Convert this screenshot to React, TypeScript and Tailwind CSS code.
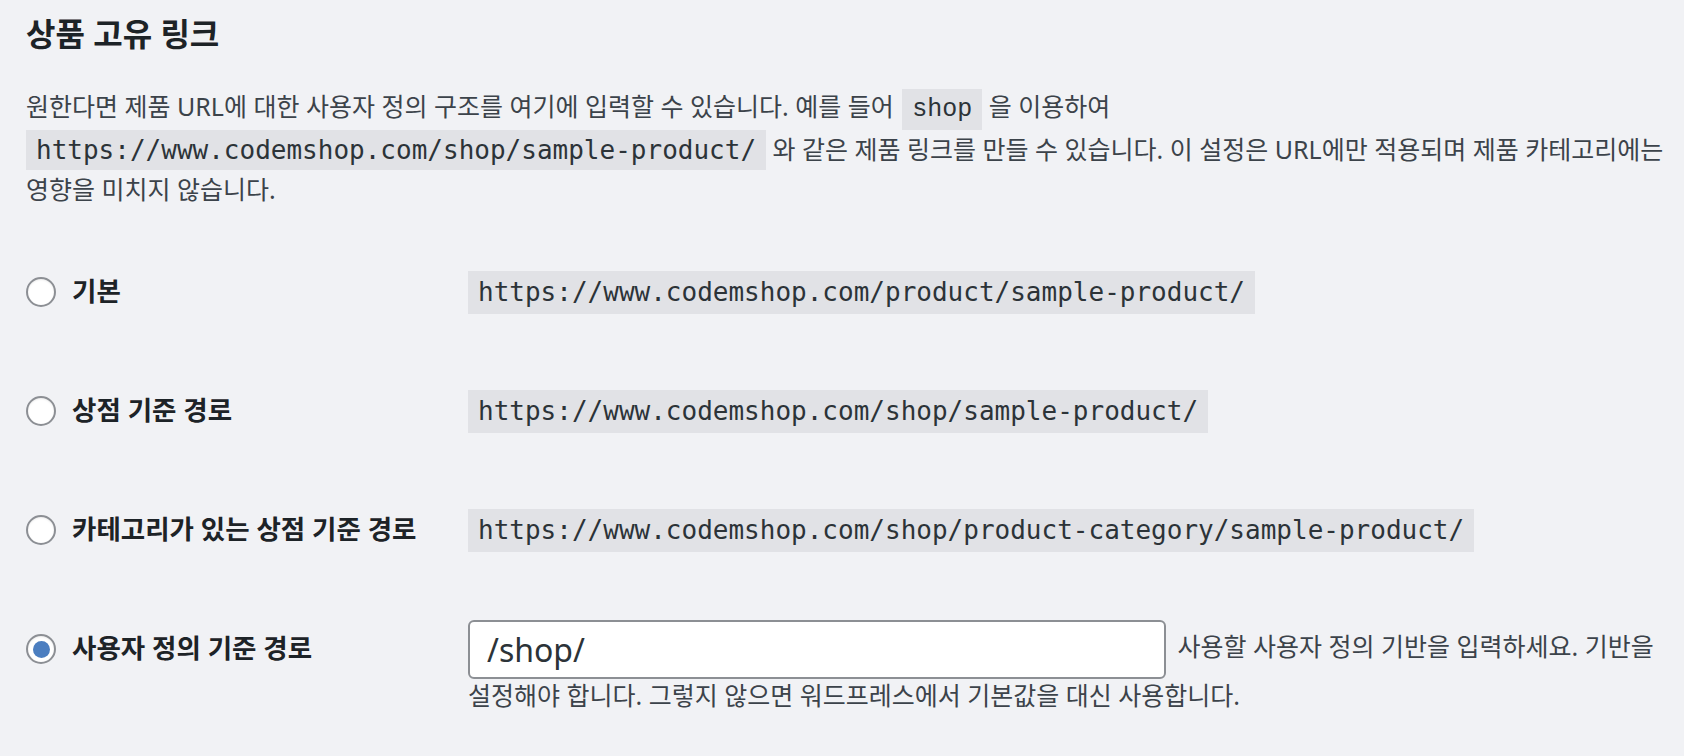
import { useState } from "react";

const sans = "font-['Noto_Sans','Noto_Sans_CJK_KR',sans-serif]";

const options = [
  { id: "default", label: "기본", url: "https://www.codemshop.com/product/sample-product/" },
  { id: "shop", label: "상점 기준 경로", url: "https://www.codemshop.com/shop/sample-product/" },
  {
    id: "category",
    label: "카테고리가 있는 상점 기준 경로",
    url: "https://www.codemshop.com/shop/product-category/sample-product/",
  },
];

const Radio = ({ checked, onChange }: { checked: boolean; onChange: () => void }) => (
  <button
    type="button"
    onClick={onChange}
    className="w-[30px] h-[30px] shrink-0 rounded-full border-2 border-[#8c8f94] bg-white flex items-center justify-center shadow-[inset_0_1px_2px_rgba(0,0,0,0.08)]"
  >
    {checked && <span className="w-[17px] h-[17px] rounded-full bg-[#4b7ec0]" />}
  </button>
);

const Code = ({ children }: { children: string }) => (
  <code className="bg-[#e1e2e6] px-[10px] py-[5px] text-[26px] text-[#2c3338] font-['DejaVu_Sans_Mono',monospace]">
    {children}
  </code>
);

export default function App() {
  const [selected, setSelected] = useState("custom");
  const [base, setBase] = useState("/shop/");

  return (
    <div className={`w-full h-[756px] overflow-hidden bg-[#f1f2f5] pl-[26px] pt-[14px] ${sans}`}>
      <h2 className="text-[32px] leading-[40px] font-bold text-[#1d2327]">상품 고유 링크</h2>

      <p className="mt-[33px] text-[25px] leading-[39.5px] text-[#3c434a] whitespace-nowrap">
        원한다면 제품 URL에 대한 사용자 정의 구조를 여기에 입력할 수 있습니다. 예를 들어{" "}
        <code className="bg-[#e1e2e6] px-[10px] py-[6px] ml-[2px] text-[25px] text-[#2c3338]">shop</code> 을 이용하여
        <br />
        <Code>https://www.codemshop.com/shop/sample-product/</Code> 와 같은 제품 링크를 만들 수 있습니다. 이 설정은
        URL에만 적용되며 제품 카테고리에는
        <br />
        영향을 미치지 않습니다.
      </p>

      <div className="mt-[23px]">
        {options.map((o) => (
          <div key={o.id} className="h-[119px] grid grid-cols-[442px_1fr] items-center">
            <label className="flex items-center gap-[16px] cursor-pointer">
              <Radio checked={selected === o.id} onChange={() => setSelected(o.id)} />
              <span className="text-[26.5px] font-bold text-[#1d2327]">{o.label}</span>
            </label>
            <div>
              <code className="inline-block bg-[#e1e2e6] px-[10px] py-[5px] leading-[33px] text-[26px] text-[#2c3338] font-['DejaVu_Sans_Mono',monospace]">
                {o.url}
              </code>
            </div>
          </div>
        ))}

        <div className="grid grid-cols-[442px_1fr] items-start pt-[30px]">
          <label className="h-[59px] flex items-center gap-[16px] cursor-pointer">
            <Radio checked={selected === "custom"} onChange={() => setSelected("custom")} />
            <span className="text-[26.5px] font-bold text-[#1d2327]">사용자 정의 기준 경로</span>
          </label>
          <div className="text-[25px] leading-[39.5px] text-[#3c434a] whitespace-nowrap">
            <input
              value={base}
              onChange={(e) => setBase(e.target.value)}
              className="align-middle w-[698px] h-[59px] mr-[5px] px-[17px] rounded-[6px] border-2 border-[#8c8f94] bg-white text-[32px] text-[#2c3338] outline-none"
            />{" "}
            사용할 사용자 정의 기반을 입력하세요. 기반을
            <br />
            <span className="relative -top-[3px]">
              설정해야 합니다. 그렇지 않으면 워드프레스에서 기본값을 대신 사용합니다.
            </span>
          </div>
        </div>
      </div>
    </div>
  );
}
